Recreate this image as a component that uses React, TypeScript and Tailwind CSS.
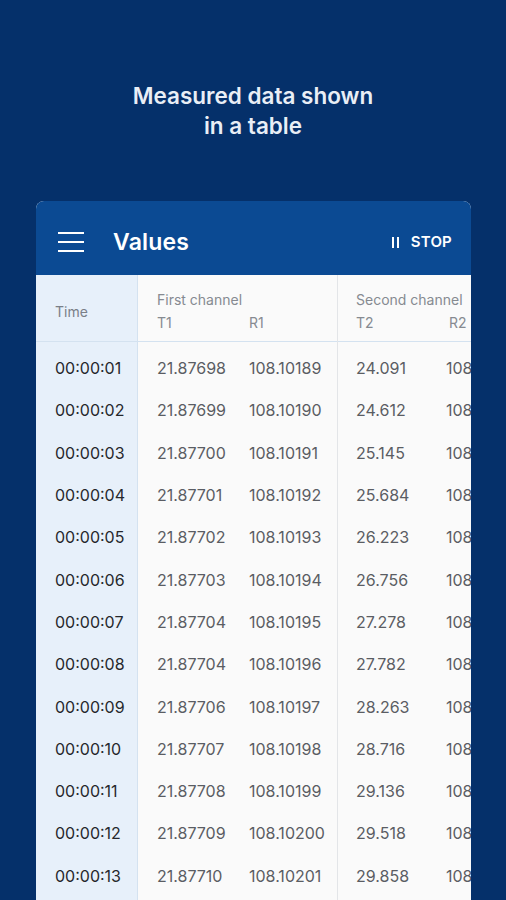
import React from "react";

type Row = {
  time: string;
  t1: string;
  r1: string;
  t2: string;
  r2: string;
};

const rows: Row[] = [
  { time: "00:00:01", t1: "21.87698", r1: "108.10189", t2: "24.091", r2: "108" },
  { time: "00:00:02", t1: "21.87699", r1: "108.10190", t2: "24.612", r2: "108" },
  { time: "00:00:03", t1: "21.87700", r1: "108.10191", t2: "25.145", r2: "108" },
  { time: "00:00:04", t1: "21.87701", r1: "108.10192", t2: "25.684", r2: "108" },
  { time: "00:00:05", t1: "21.87702", r1: "108.10193", t2: "26.223", r2: "108" },
  { time: "00:00:06", t1: "21.87703", r1: "108.10194", t2: "26.756", r2: "108" },
  { time: "00:00:07", t1: "21.87704", r1: "108.10195", t2: "27.278", r2: "108" },
  { time: "00:00:08", t1: "21.87704", r1: "108.10196", t2: "27.782", r2: "108" },
  { time: "00:00:09", t1: "21.87706", r1: "108.10197", t2: "28.263", r2: "108" },
  { time: "00:00:10", t1: "21.87707", r1: "108.10198", t2: "28.716", r2: "108" },
  { time: "00:00:11", t1: "21.87708", r1: "108.10199", t2: "29.136", r2: "108" },
  { time: "00:00:12", t1: "21.87709", r1: "108.10200", t2: "29.518", r2: "108" },
  { time: "00:00:13", t1: "21.87710", r1: "108.10201", t2: "29.858", r2: "108" },
];

const MenuIcon = () => (
  <svg width="26" height="20" viewBox="0 0 26 20" className="shrink-0">
    <rect x="0" y="0" width="26" height="2" fill="#ffffff" />
    <rect x="0" y="9" width="26" height="2" fill="#ffffff" />
    <rect x="0" y="18" width="26" height="2" fill="#ffffff" />
  </svg>
);

export default function App() {
  return (
    <div
      className="w-[506px] h-[900px] overflow-hidden bg-[#05306a] flex flex-col items-center"
      style={{ fontFamily: "Inter, Roboto, 'Liberation Sans', sans-serif" }}
    >
      <h1 className="mt-[81px] shrink-0 text-center text-[22.5px] leading-[30px] font-semibold text-[#e9eef6]">
        Measured data shown
        <br />
        in a table
      </h1>

      <div className="mt-[60px] flex-1 min-h-0 w-[435px] ml-[1px] rounded-t-[8px] overflow-hidden bg-white flex flex-col">
        {/* header bar */}
        <div className="h-[74px] shrink-0 bg-[#0b4a93] flex items-center pt-[8px] pl-[22px] pr-[19px]">
          <MenuIcon />
          <span className="ml-[29px] text-[23px] font-semibold text-white tracking-[0.2px]">
            Values
          </span>
          <div className="ml-auto flex items-center gap-[12px] text-white">
            <div className="flex gap-[3px] mt-[1px]">
              <span className="w-[2px] h-[11px] bg-white" />
              <span className="w-[2px] h-[11px] bg-white" />
            </div>
            <span className="text-[15px] font-semibold tracking-[0.2px]">STOP</span>
          </div>
        </div>

        {/* table */}
        <div className="flex flex-1 min-h-0">
          {/* time column */}
          <div className="w-[102px] shrink-0 bg-[#e7f0fa] border-r border-[#d4e2f0]">
            <div className="h-[67px] flex items-center pt-[6px] pl-[19px] text-[14px] text-[#7a7f88] border-b border-[#d4e2f0]">
              Time
            </div>
            <div className="pt-[5px]">
              {rows.map((r) => (
                <div
                  key={r.time}
                  className="h-[42.3px] flex items-center pl-[19px] text-[16px] text-[#26282c]"
                >
                  {r.time}
                </div>
              ))}
            </div>
          </div>

          {/* first channel */}
          <div className="w-[200px] shrink-0 bg-[#fafafa] border-r border-[#e3e5e8]">
            <div className="h-[67px] flex flex-col justify-center pt-[7px] pl-[19px] text-[14px] text-[#868a91] border-b border-[#d4e2f0]">
              <span className="leading-[20px]">First channel</span>
              <div className="flex leading-[20px] mt-[3px]">
                <span className="w-[92px]">T1</span>
                <span>R1</span>
              </div>
            </div>
            <div className="pt-[5px]">
              {rows.map((r) => (
                <div
                  key={r.time}
                  className="h-[42.3px] flex items-center pl-[19px] text-[16px] text-[#5a5d63]"
                >
                  <span className="w-[92px]">{r.t1}</span>
                  <span>{r.r1}</span>
                </div>
              ))}
            </div>
          </div>

          {/* second channel */}
          <div className="flex-1 min-w-0 bg-[#fafafa] overflow-hidden">
            <div className="h-[67px] flex flex-col justify-center pt-[7px] pl-[18px] text-[14px] text-[#868a91] border-b border-[#d4e2f0] whitespace-nowrap">
              <span className="leading-[20px]">Second channel</span>
              <div className="flex leading-[20px] mt-[3px]">
                <span className="w-[93px] shrink-0">T2</span>
                <span>R2</span>
              </div>
            </div>
            <div className="pt-[5px]">
              {rows.map((r) => (
                <div
                  key={r.time}
                  className="h-[42.3px] flex items-center pl-[18px] text-[16px] text-[#5a5d63] whitespace-nowrap"
                >
                  <span className="w-[90px] shrink-0">{r.t2}</span>
                  <span>{r.r2}</span>
                </div>
              ))}
            </div>
          </div>
        </div>
      </div>
    </div>
  );
}
